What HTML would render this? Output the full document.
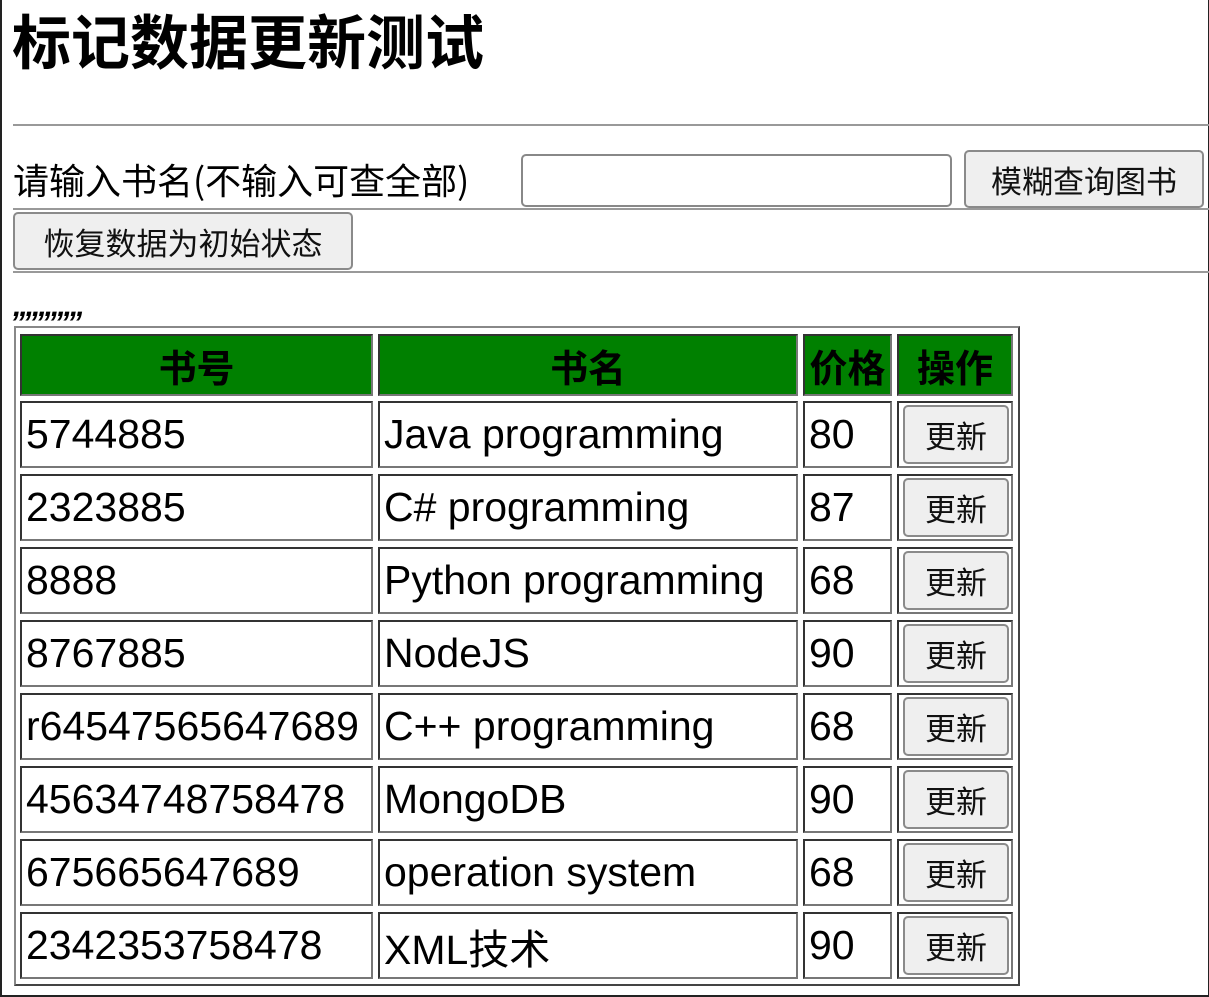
<!DOCTYPE html>
<html><head><meta charset="utf-8"><style>
*{box-sizing:border-box;margin:0;padding:0}
body{width:1209px;height:997px;overflow:hidden;background:#fff;font-family:"Liberation Sans","Noto Sans CJK SC",sans-serif;color:#000;position:relative}
.frame{position:absolute;left:0;top:0;width:1209px;height:997px;border:2px solid #222;border-top:none;border-right:1px solid #222}
.a{position:absolute;white-space:nowrap}
.hr{position:absolute;left:13px;right:0;height:2px;background:#999}
.btn{position:absolute;background:#efefef;border:2px solid #8a8a8a;border-radius:5px;font-size:31px;display:flex;align-items:center;justify-content:center;font-family:"Noto Sans CJK SC",sans-serif;color:#111}
.c{position:absolute;border:2px solid #777;border-top-color:#333;border-left-color:#333;font-size:41px;display:flex;align-items:center;padding-left:4px;overflow:hidden;white-space:nowrap}
.h{background:#008000;font-weight:bold;font-size:38px;justify-content:center;padding:0;font-family:"Noto Sans CJK SC",sans-serif}
</style></head><body>
<div class="frame"></div>
<div class="a" style="left:12px;top:0px;font-size:59px;font-weight:bold;line-height:78px;font-family:'Noto Sans CJK SC',sans-serif">标记数据更新测试</div>
<div class="hr" style="top:124px"></div>
<div class="a" style="left:13px;top:152px;font-size:36px;line-height:54px;font-family:'Noto Sans CJK SC',sans-serif">请输入书名(不输入可查全部)</div>
<div class="a" style="left:521px;top:154px;width:431px;height:53px;border:2px solid #888;border-radius:5px"></div>
<div class="btn" style="left:964px;top:150px;width:240px;height:58px">模糊查询图书</div>
<div class="hr" style="top:208px"></div>
<div class="btn" style="left:13px;top:212px;width:340px;height:58px">恢复数据为初始状态</div>
<div class="hr" style="top:271px"></div>
<div class="a" style="left:13px;top:292px;font-size:30px;font-weight:bold;font-style:italic;letter-spacing:-2px;line-height:30px">,,,,,,,,,,,</div>
<div class="a" style="left:14px;top:326px;width:1006px;height:660px;border:2px solid #444;border-top-color:#888;border-left-color:#888"></div>
<div class="c h" style="left:20px;top:334px;width:353px;height:62px">书号</div>
<div class="c h" style="left:378px;top:334px;width:420px;height:62px">书名</div>
<div class="c h" style="left:803px;top:334px;width:89px;height:62px">价格</div>
<div class="c h" style="left:897px;top:334px;width:116px;height:62px">操作</div>
<div id="rows"></div>
<script>
var d=[["5744885","Java programming","80"],["2323885","C# programming","87"],["8888","Python programming","68"],["8767885","NodeJS","90"],["r64547565647689","C++ programming","68"],["45634748758478","MongoDB","90"],["675665647689","operation system","68"],["2342353758478","XML技术","90"]];
var h="";
d.forEach(function(r,i){var t=401+i*73;
h+='<div class="c" style="left:20px;top:'+t+'px;width:353px;height:67px">'+r[0]+'</div>';
h+='<div class="c" style="left:378px;top:'+t+'px;width:420px;height:67px">'+r[1]+'</div>';
h+='<div class="c" style="left:803px;top:'+t+'px;width:89px;height:67px">'+r[2]+'</div>';
h+='<div class="c" style="left:897px;top:'+t+'px;width:116px;height:67px"></div>';
h+='<div class="btn" style="left:903px;top:'+(t+4)+'px;width:106px;height:59px">更新</div>';});
document.getElementById("rows").innerHTML=h;
</script>
</body></html>
